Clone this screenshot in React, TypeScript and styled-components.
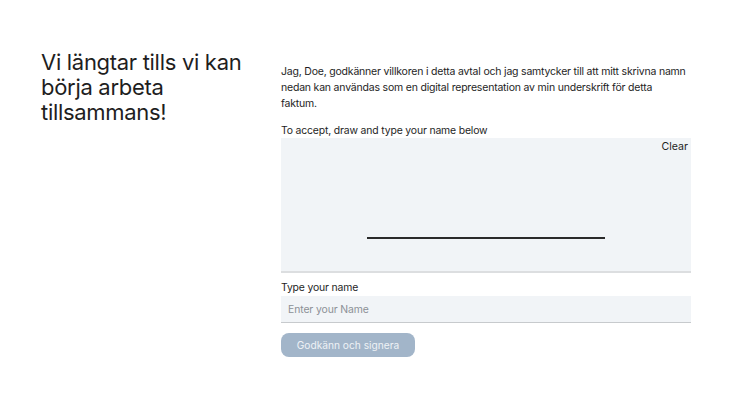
import styled, { createGlobalStyle } from 'styled-components';

//== global ==//
const GlobalStyle = createGlobalStyle`
    html, body {
        margin: 0;
        padding: 0;
        background: #ffffff;
    }

    body {
        font-family: Inter, "Noto Sans", sans-serif;
        color: #1b1b1b;
    }
`;

//== style ==//
const Page = styled.div`
    width: 750px;
    height: 410px;
    display: grid;
    grid-template-columns: 240px 410px;
    padding: 50px 0 0 41px;
    box-sizing: border-box;
`;

const Heading = styled.h1`
    margin: 0;
    font-size: 22px;
    font-weight: 400;
    line-height: 25px;
    letter-spacing: -0.3px;
    color: #1e1e1e;
`;

const Form = styled.div`
    display: flex;
    flex-direction: column;
    padding-top: 14px;
`;

const Terms = styled.p`
    margin: 0 0 12px;
    font-size: 10.5px;
    line-height: 16px;
    letter-spacing: -0.2px;
    color: #1e1e1e;
`;

const Label = styled.label`
    display: block;
    font-size: 10.4px;
    line-height: 14px;
    letter-spacing: -0.15px;
    color: #1e1e1e;
`;

const Pad = styled.div`
    position: relative;
    height: 135px;
    background: #f1f4f7;
    border-bottom: 2px solid #dcdee0;
    display: flex;
    align-items: flex-end;
    justify-content: center;
    padding-bottom: 32px;
    box-sizing: border-box;
`;

const SignLine = styled.div`
    width: 238px;
    height: 2px;
    background: #2a2a2a;
`;

const ClearButton = styled.button`
    position: absolute;
    top: 2px;
    right: 3px;
    border: 0;
    background: none;
    font-family: Inter, sans-serif;
    font-size: 10.6px;
    line-height: 14px;
    color: #1e1e1e;
    padding: 0;
`;

const NameField = styled.div`
    margin-top: 8px;
    display: flex;
    flex-direction: column;
    gap: 1px;
`;

const Input = styled.input`
    display: block;
    width: 100%;
    height: 27px;
    box-sizing: border-box;
    border: 0;
    border-bottom: 1px solid #c7cacd;
    background: #f1f4f7;
    padding: 0 7px;
    font-family: Inter, sans-serif;
    font-size: 10.4px;
    letter-spacing: -0.1px;
    color: #1e1e1e;
    outline: none;

    &::placeholder {
        color: #8c9096;
    }
`;

const Submit = styled.button`
    margin-top: 10px;
    width: 134px;
    height: 24px;
    border: 0;
    border-radius: 8px;
    background: #a2b5c9;
    color: #eef2f6;
    font-family: Inter, sans-serif;
    font-size: 10.2px;
    align-self: flex-start;
`;

//== component ==//
export default function App() {
    return (
        <>
            <GlobalStyle />
            <Page>
                <Heading>Vi längtar tills vi kan börja arbeta tillsammans!</Heading>
                <Form>
                    <Terms>
                        Jag, Doe, godkänner villkoren i detta avtal och jag samtycker till att mitt skrivna namn
                        nedan kan användas som en digital representation av min underskrift för detta
                        <br />
                        faktum.
                    </Terms>
                    <Label>To accept, draw and type your name below</Label>
                    <Pad>
                        <ClearButton>Clear</ClearButton>
                        <SignLine />
                    </Pad>
                    <NameField>
                        <Label>Type your name</Label>
                        <Input placeholder="Enter your Name" />
                    </NameField>
                    <Submit>Godkänn och signera</Submit>
                </Form>
            </Page>
        </>
    );
}
